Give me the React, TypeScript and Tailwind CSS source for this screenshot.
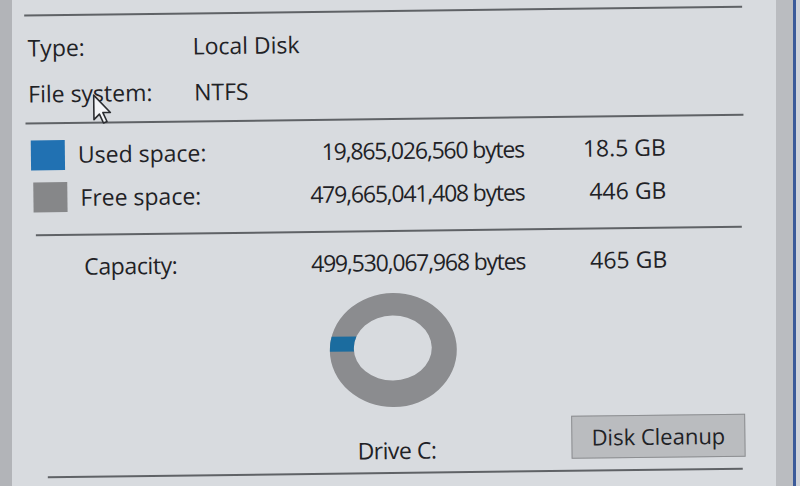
import React from "react";

// Disk properties panel (photo of a Windows "General" tab)
const TEXT = "text-[#1f2226]";
const NUM = "text-right tracking-[-1.2px]";

const Line = ({ ml, w, mt = 0 }: { ml: number; w: number; mt?: number }) => (
  <div
    className="h-[2px] bg-[#5f6266]"
    style={{ marginLeft: ml, width: w, marginTop: mt }}
  />
);

const Donut = () => (
  <svg width="128" height="116" viewBox="0 0 128 116">
    <defs>
      <clipPath id="usedSlice">
        <rect x="0" y="43" width="30" height="15" />
      </clipPath>
    </defs>
    <path
      fillRule="evenodd"
      fill="#8b8c8f"
      d="M0.5 57a63.5 57 0 1 0 127 0a63.5 57 0 1 0 -127 0z M24.5 55a39 32.5 0 1 0 78 0a39 32.5 0 1 0 -78 0z"
    />
    <path
      fillRule="evenodd"
      fill="#1b6c9f"
      clipPath="url(#usedSlice)"
      d="M0.5 57a63.5 57 0 1 0 127 0a63.5 57 0 1 0 -127 0z M24.5 55a39 32.5 0 1 0 78 0a39 32.5 0 1 0 -78 0z"
    />
  </svg>
);

const Cursor = () => (
  <svg
    width="22"
    height="32"
    viewBox="0 0 22 32"
    className="absolute left-[82px] top-[90px]"
  >
    <path
      d="M1.5 1.5 L1.5 26 L7 20.5 L11 29.5 L14.5 28 L10.5 19 L18 19 Z"
      fill="#f4f5f7"
      stroke="#2a2c30"
      strokeWidth="1.6"
      strokeLinejoin="round"
    />
  </svg>
);

export default function App() {
  return (
    <div
      className="w-[800px] h-[486px] bg-[#d8dbdf] flex overflow-hidden"
      style={{ fontFamily: '"Open Sans", "Noto Sans", sans-serif' }}
    >
      <div className="w-[12px] h-full bg-[#b2b4b8]" />

      <div className="flex-1 h-full relative">
        <div className={`h-full -rotate-[0.7deg] origin-center pt-[10px] ${TEXT} text-[23px] font-medium`}>
          <Line ml={15} w={718} />

          {/* Type / File system */}
          <div className="h-[62px] flex items-center">
            <span className="ml-[18px] w-[165px]">Type:</span>
            <span>Local Disk</span>
          </div>
          <div className="h-[30px] flex items-center">
            <span className="ml-[18px] w-[166px]">File system:</span>
            <span>NTFS</span>
          </div>

          <Line ml={15} w={718} mt={14} />

          {/* Used / Free */}
          <div className="h-[61px] flex items-center">
            <div className="ml-[20px] w-[34px] h-[30px] bg-[#2171b2]" />
            <span className="ml-[13px] w-[216px]">Used space:</span>
            <span className={`w-[230px] ${NUM}`}>19,865,026,560 bytes</span>
            <span className="w-[142px] text-right">18.5 GB</span>
          </div>
          <div className="h-[24px] flex items-center">
            <div className="ml-[22px] w-[34px] h-[30px] bg-[#868789]" />
            <span className="ml-[13px] w-[214px]">Free space:</span>
            <span className={`w-[230px] ${NUM}`}>479,665,041,408 bytes</span>
            <span className="w-[142px] text-right">446 GB</span>
          </div>

          <Line ml={24} w={706} mt={25} />

          {/* Capacity */}
          <div className="h-[61px] flex items-center">
            <span className="ml-[72px] w-[211px] tracking-[-0.4px]">Capacity:</span>
            <span className={`w-[230px] ${NUM}`}>499,530,067,968 bytes</span>
            <span className="w-[142px] text-right">465 GB</span>
          </div>

          <div className="h-[114px] flex">
            <div className="ml-[316px]">
              <Donut />
            </div>
          </div>

          {/* Drive label and cleanup button */}
          <div className="h-[65px] flex items-start">
            <span className="ml-[343px] mt-[31px] leading-[24px] w-[80px] tracking-[-0.5px]">Drive C:</span>
            <button className="ml-[134px] mt-[11px] w-[174px] h-[43px] bg-[#babcbf] border-[1.5px] border-[#8d8f92] text-[22px] font-medium">
              Disk Cleanup
            </button>
          </div>

          <Line ml={33} w={695} />

          <Cursor />
        </div>
      </div>

      <div className="w-[17px] h-full bg-[#babcc0]" />
      <div className="w-[3px] h-full bg-[#3b5a99]" />
      <div className="w-[4px] h-full bg-[#cfd3da]" />
    </div>
  );
}
